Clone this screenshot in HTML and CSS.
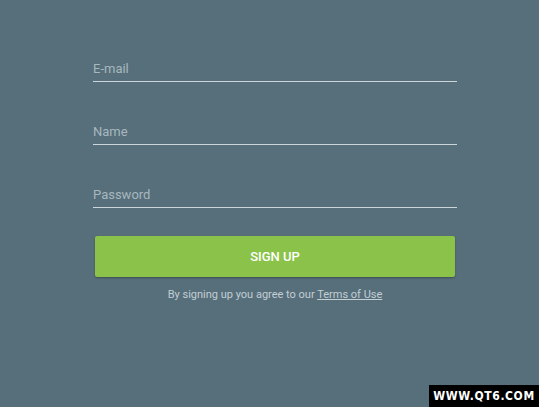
FILE: index.html
```html
<!DOCTYPE html>
<html>
<head>
<meta charset="utf-8">
<link rel="stylesheet" href="styles.css">
</head>
<body>
<main class="form">
  <div class="field">E-mail</div>
  <div class="field">Name</div>
  <div class="field">Password</div>
  <button class="signup">SIGN UP</button>
  <p class="terms">By signing up you agree to our <a href="#">Terms of Use</a></p>
</main>
<div class="watermark">WWW.QT6.COM</div>
</body>
</html>
```
FILE: styles.css
```css
html, body {
  margin: 0;
  height: 100%;
}
body {
  background: #566f7b;
  font-family: Roboto, "Liberation Sans", sans-serif;
  position: relative;
  overflow: hidden;
}
.form {
  width: 364px;
  margin-left: 93px;
  padding-top: 61px;
  display: flex;
  flex-direction: column;
}
.field {
  font-size: 13px;
  line-height: 16px;
  color: #a8b7be;
  padding-bottom: 4px;
  border-bottom: 1px solid #cdd6da;
  margin-bottom: 42px;
}
.field:nth-child(3) {
  margin-bottom: 28px;
}
.signup {
  margin: 0 2px;
  height: 41px;
  border: none;
  border-radius: 2px;
  background: #8bc34a;
  color: #fff;
  font-family: Roboto, "Liberation Sans", sans-serif;
  font-weight: 500;
  font-size: 13px;
  box-shadow: 0 1px 2px rgba(0,0,0,0.3);
  padding: 0;
}
.terms {
  margin: 11px 0 0;
  text-align: center;
  font-size: 11px;
  line-height: 14px;
  color: #c3ced3;
}
.terms a {
  color: #c3ced3;
}
.watermark {
  position: absolute;
  right: 0;
  bottom: 0;
  width: 110px;
  height: 22px;
  background: #000;
  color: #fff;
  font-family: "DejaVu Sans Condensed", "DejaVu Sans", sans-serif;
  font-weight: bold;
  font-size: 12px;
  line-height: 23px;
  text-align: center;
  letter-spacing: 0.6px;
}
```
